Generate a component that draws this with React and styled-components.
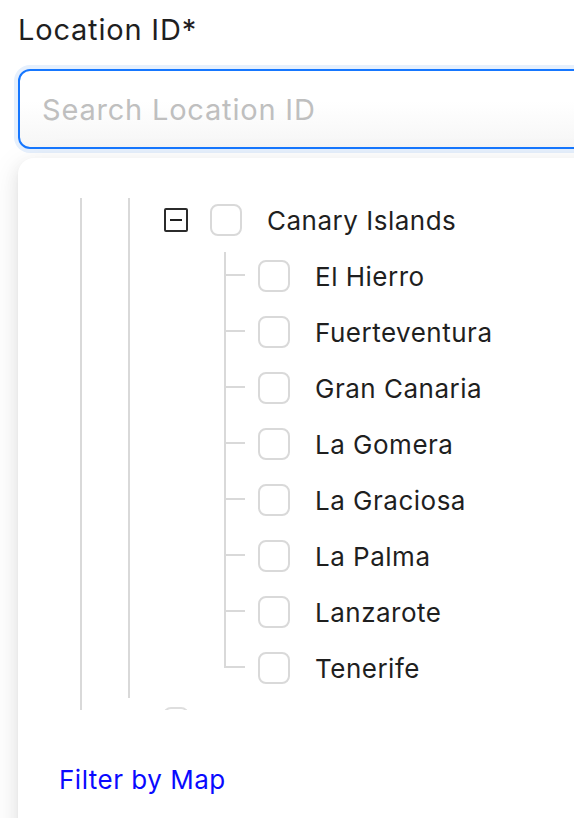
import React from "react";
import styled, { createGlobalStyle } from "styled-components";

const GlobalStyle = createGlobalStyle`
  html, body { margin: 0; padding: 0; background: #ffffff; overflow: hidden; }
  body { font-family: Inter, "Noto Sans", "Liberation Sans", sans-serif; -webkit-font-smoothing: antialiased; }
  * { box-sizing: border-box; }
`;

const Page = styled.div`
  width: 574px;
  height: 818px;
  overflow: hidden;
  padding: 13px 0 0 18px;
`;

const FieldLabel = styled.div`
  font-size: 29px;
  line-height: 34px;
  color: #1f1f1f;
  letter-spacing: 0.8px;
`;

const SearchInput = styled.input`
  display: block;
  margin-top: 22px;
  width: 600px;
  height: 80px;
  border: 2px solid #1677ff;
  border-radius: 12px;
  box-shadow: 0 0 0 4px #e6f0fd;
  background: linear-gradient(#ffffff 40%, #f6f6f6);
  padding: 0 22px;
  font-family: inherit;
  font-size: 29px;
  letter-spacing: 0.8px;
  color: #1f1f1f;
  outline: none;
  &::placeholder { color: #bfbfbf; }
`;

const Panel = styled.div`
  margin-top: 9px;
  width: 620px;
  height: 700px;
  background: #ffffff;
  border-radius: 16px;
  box-shadow: 0 6px 16px 0 rgba(0, 0, 0, 0.08), 0 3px 6px -4px rgba(0, 0, 0, 0.12), 0 9px 28px 8px rgba(0, 0, 0, 0.05);
  padding-top: 34px;
`;

const Viewport = styled.div`
  display: flex;
  height: 518px;
  overflow: hidden;
  padding-left: 38px;
`;

const GuideCol = styled.div`
  position: relative;
  width: 48px;
  flex: none;
  &::before {
    content: "";
    position: absolute;
    left: 24px;
    top: 6px;
    bottom: ${(p) => p.$bottom || 0}px;
    width: 2px;
    background: #d9d9d9;
  }
`;

const TreeBody = styled.div`
  display: flex;
  flex-direction: column;
`;

const Row = styled.div`
  display: flex;
  align-items: center;
  height: 56px;
  flex: none;
`;

const Switcher = styled.div`
  position: relative;
  width: 48px;
  height: 100%;
  flex: none;
  display: flex;
  align-items: ${(p) => (p.$top ? "flex-start" : "center")};
  justify-content: center;
`;

const LeafSwitcher = styled(Switcher)`
  &::after {
    content: "";
    position: absolute;
    left: 24px;
    top: calc(50% - 2px);
    width: 21px;
    height: 2px;
    background: #d9d9d9;
  }
`;

const Expander = styled.span`
  position: relative;
  width: 24px;
  height: 24px;
  border: 2px solid #2b2b2b;
  border-radius: 2px;
  &::after {
    content: "";
    position: absolute;
    left: 4px;
    right: 4px;
    top: 9px;
    height: 2px;
    background: #1f1f1f;
  }
`;

const GhostBox = styled.span`
  margin-top: 11px;
  width: 26px;
  height: 24px;
  border: 2px solid #dedede;
  border-radius: 8px;
`;

const Checkbox = styled.span`
  width: 32px;
  height: 32px;
  flex: none;
  margin-left: 10px;
  border: 2px solid #d9d9d9;
  border-radius: 8px;
  background: #fff;
`;

const NodeTitle = styled.span`
  margin-left: 25px;
  font-size: 26px;
  color: #1f1f1f;
  white-space: nowrap;
  letter-spacing: 0.5px;
`;

const ChildGroup = styled.div`
  position: relative;
  display: flex;
  flex-direction: column;
  padding-left: 48px;
  &::before {
    content: "";
    position: absolute;
    left: 72px;
    top: 4px;
    bottom: 28px;
    width: 2px;
    background: #d9d9d9;
  }
`;

const Footer = styled.div`
  padding: 54px 0 0 41px;
`;

const MapLink = styled.a`
  font-size: 26px;
  line-height: 32px;
  letter-spacing: 0.5px;
  color: #0a0aff;
  text-decoration: none;
  cursor: pointer;
`;

const islands = [
  "El Hierro",
  "Fuerteventura",
  "Gran Canaria",
  "La Gomera",
  "La Graciosa",
  "La Palma",
  "Lanzarote",
  "Tenerife",
];

export default function App() {
  return (
    <>
      <GlobalStyle />
      <Page>
        <FieldLabel>Location ID*</FieldLabel>
        <SearchInput placeholder="Search Location ID" />
        <Panel>
          <Viewport>
            <GuideCol />
            <GuideCol $bottom={12} />
            <TreeBody>
              <Row>
                <Switcher>
                  <Expander />
                </Switcher>
                <Checkbox />
                <NodeTitle>Canary Islands</NodeTitle>
              </Row>
              <ChildGroup>
                {islands.map((name) => (
                  <Row key={name}>
                    <LeafSwitcher />
                    <Checkbox />
                    <NodeTitle>{name}</NodeTitle>
                  </Row>
                ))}
              </ChildGroup>
              <Row>
                <Switcher $top>
                  <GhostBox />
                </Switcher>
              </Row>
            </TreeBody>
          </Viewport>
          <Footer>
            <MapLink>Filter by Map</MapLink>
          </Footer>
        </Panel>
      </Page>
    </>
  );
}
